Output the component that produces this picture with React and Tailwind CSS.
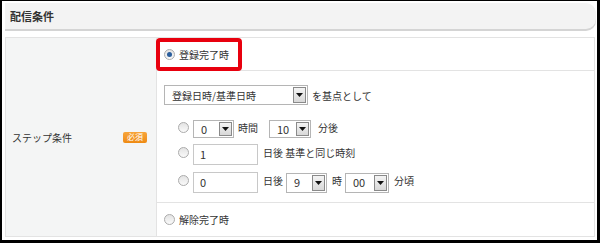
import React from "react";

const font = { fontFamily: '"Noto Sans CJK JP", "Noto Sans", sans-serif' };

function Radio({ checked }) {
  return (
    <span className="inline-flex items-center justify-center w-[11px] h-[11px] rounded-full border border-[#ababab] bg-gradient-to-b from-[#e3e3e3] to-[#fafafa] shrink-0">
      {checked && <span className="w-[5px] h-[5px] rounded-full bg-[#2b5e9c]" />}
    </span>
  );
}

function Select({ value, w, h = 18 }) {
  return (
    <span
      className={`inline-flex items-stretch border border-[#b5b5b5] bg-white ${w}`}
      style={{ height: h }}
    >
      <span className="flex-1 flex items-center pl-[7px] text-[11px] text-[#333]">{value}</span>
      <span className="w-[13px] my-[1px] mr-[1px] flex items-center justify-center border border-[#8a8a8a] bg-gradient-to-b from-[#f4f4f4] to-[#d8d8d8]">
        <svg width="7" height="4" viewBox="0 0 7 4"><path d="M0 0h7L3.5 4z" fill="#111" /></svg>
      </span>
    </span>
  );
}

function Input({ value }) {
  return (
    <span className="inline-flex items-center w-[65px] h-[21px] border border-[#c8c8c8] bg-white pl-[6px] text-[11px] text-[#333]">
      {value}
    </span>
  );
}

const T = ({ children, className = "" }) => (
  <span className={`text-[10px] text-[#333] ${className}`}>{children}</span>
);

export default function App() {
  return (
    <div className="w-[600px] h-[243px] bg-white border-t-[1px] border-l-[2px] border-r-[3px] border-b-[3px] border-black overflow-hidden" style={font}>
      <div className="ml-[3px] mr-[1px] mt-[2px] h-[26px] bg-[#f3f3f3] rounded-r-[10px] shadow-[0_2px_0_#d4d4d4] flex items-center pl-[5px]">
        <span className="text-[11px] font-bold text-[#333]">配信条件</span>
      </div>
      <div className="mt-[8px] ml-[3px] mr-[2px] h-[200px] border border-[#e3e3e3] grid grid-cols-[151px_1fr] grid-rows-[33px_132px_1fr]">
        <div className="row-span-3 bg-[#f4f5f5] border-r border-[#e3e3e3] flex items-center pl-[6px] pr-[9px] justify-between">
          <T>ステップ条件</T>
          <span className="w-[24px] h-[11px] rounded-[2px] bg-gradient-to-b from-[#f7a53a] to-[#ee8a10] flex items-center justify-center text-[8px] leading-none text-white">必須</span>
        </div>
        <div className="border-b border-[#e3e3e3] relative">
          <div className="absolute left-[-1px] top-[0px] w-[86px] h-[33px] border-[4px] border-[#e8000e] rounded-[4px]" />
          <div className="flex items-center h-full pl-[7px] gap-[4px]">
            <Radio checked />
            <T>登録完了時</T>
          </div>
        </div>
        <div className="border-b border-[#e3e3e3] pl-[5px] pt-[14px]">
          <div className="flex items-center gap-[4px] ml-[2px]">
            <Select value={<span className="text-[10px]">登録日時/基準日時</span>} w="w-[144px]" h={20} />
            <T>を基点として</T>
          </div>
          <div className="pl-[16px] mt-[12px] flex flex-col">
            <div className="flex items-center h-[20px]">
              <Radio />
              <span className="ml-[4px]"><Select value="0" w="w-[41px]" /></span>
              <T className="ml-[4px]">時間</T>
              <span className="ml-[11px]"><Select value="10" w="w-[42px]" /></span>
              <T className="ml-[7px]">分後</T>
            </div>
            <div className="flex items-center h-[21px] mt-[5px]">
              <Radio />
              <span className="ml-[4px]"><Input value="1" /></span>
              <T className="ml-[5px]">日後 基準と同じ時刻</T>
            </div>
            <div className="flex items-center h-[21px] mt-[7px]">
              <Radio />
              <span className="ml-[4px]"><Input value="0" /></span>
              <T className="ml-[5px]">日後</T>
              <span className="ml-[3px]"><Select value="9" w="w-[41px]" h={20} /></span>
              <T className="ml-[5px]">時</T>
              <span className="ml-[3px]"><Select value="00" w="w-[44px]" h={20} /></span>
              <T className="ml-[5px]">分頃</T>
            </div>
          </div>
        </div>
        <div className="flex items-center pl-[7px] gap-[4px]">
          <Radio />
          <T>解除完了時</T>
        </div>
      </div>
    </div>
  );
}
